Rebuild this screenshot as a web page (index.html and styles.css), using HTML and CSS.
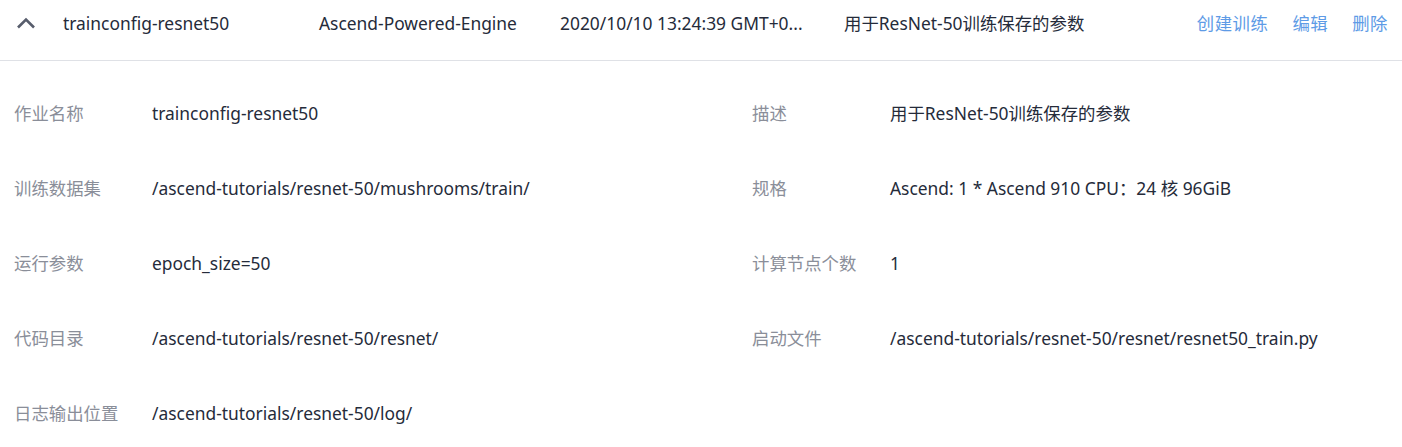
FILE: index.html
```html
<!DOCTYPE html>
<html lang="zh">
<head>
<meta charset="utf-8">
<link rel="stylesheet" href="styles.css">
</head>
<body>
<div class="row-head">
  <span class="chev"><svg width="20" height="12" viewBox="0 0 20 12"><path d="M2 10.5 L10 2.5 L18 10.5" fill="none" stroke="#575d6c" stroke-width="2.6"/></svg></span>
  <span class="c-name">trainconfig-resnet50</span>
  <span class="c-engine">Ascend-Powered-Engine</span>
  <span class="c-date">2020/10/10 13:24:39 GMT+0...</span>
  <span class="c-desc">用于ResNet-50训练保存的参数</span>
  <span class="c-actions"><a>创建训练</a><a>编辑</a><a>删除</a></span>
</div>
<div class="detail">
  <div class="item"><span class="lbl">作业名称</span><span class="val">trainconfig-resnet50</span></div>
  <div class="item"><span class="lbl">描述</span><span class="val">用于ResNet-50训练保存的参数</span></div>
  <div class="item"><span class="lbl">训练数据集</span><span class="val">/ascend-tutorials/resnet-50/mushrooms/train/</span></div>
  <div class="item"><span class="lbl">规格</span><span class="val">Ascend: 1 * Ascend 910 CPU：24 核 96GiB</span></div>
  <div class="item"><span class="lbl">运行参数</span><span class="val">epoch_size=50</span></div>
  <div class="item"><span class="lbl">计算节点个数</span><span class="val">1</span></div>
  <div class="item"><span class="lbl">代码目录</span><span class="val">/ascend-tutorials/resnet-50/resnet/</span></div>
  <div class="item"><span class="lbl">启动文件</span><span class="val">/ascend-tutorials/resnet-50/resnet/resnet50_train.py</span></div>
  <div class="item"><span class="lbl">日志输出位置</span><span class="val">/ascend-tutorials/resnet-50/log/</span></div>
</div>
</body>
</html>
```
FILE: styles.css
```css
html, body { margin: 0; padding: 0; background: #fff; }
body {
  font-family: "Noto Sans", "Noto Sans CJK SC", sans-serif;
  font-size: 17.4px;
  color: #252b3a;
  width: 1402px;
  overflow: hidden;
}
.row-head {
  display: flex;
  align-items: center;
  height: 61px;
  box-sizing: border-box;
  padding-bottom: 15px;
  border-bottom: 1px solid #dfe1e6;
  white-space: nowrap;
}
.chev { width: 63px; padding-left: 16px; box-sizing: border-box; display: flex; }
.c-name { width: 256px; }
.c-engine { width: 241px; }
.c-date { width: 284px; }
.c-desc { flex: 1; }
.c-actions { display: flex; gap: 24px; padding-right: 14px; }
.c-actions a { color: #5e9be6; cursor: pointer; letter-spacing: 0.5px; }
.detail {
  display: grid;
  grid-template-columns: 738px 1fr;
  padding: 41px 0 0 14px;
  row-gap: 52px;
}
.item { display: flex; line-height: 23px; white-space: nowrap; }
.lbl { width: 138px; color: #8a8e99; flex-shrink: 0; }
.val { color: #252b3a; }
```
